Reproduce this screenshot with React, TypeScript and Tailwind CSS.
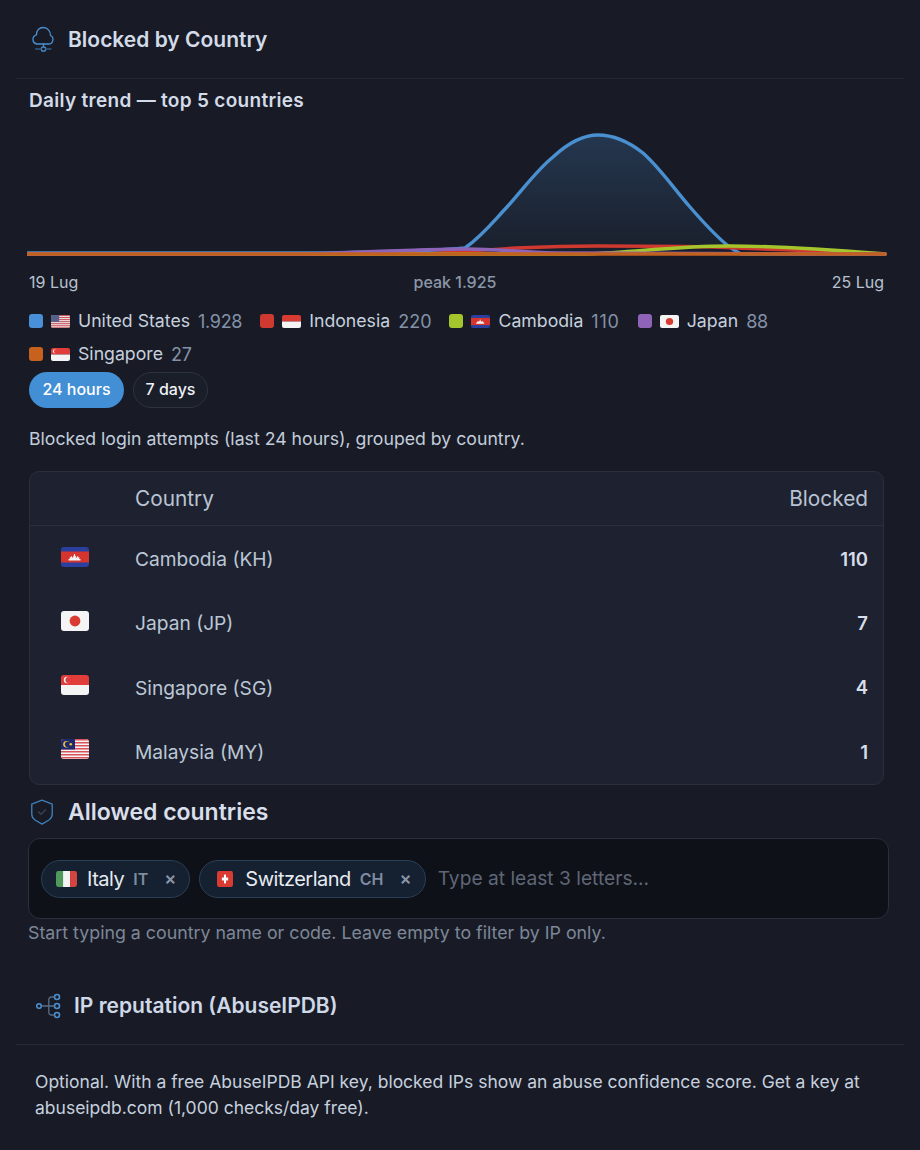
import React from "react";

type Code = "US" | "ID" | "KH" | "JP" | "SG" | "MY" | "IT" | "CH";

function FlagArt({ code }: { code: Code }) {
  switch (code) {
    case "US":
      return (
        <>
          <rect width="28" height="20" fill="#eeeeee" />
          {[0, 3, 6, 9, 12, 15, 18].map((y) => (
            <rect key={y} y={y} width="28" height="1.6" fill="#c9545c" />
          ))}
          <rect width="12" height="10.5" fill="#55608c" />
        </>
      );
    case "ID":
      return (
        <>
          <rect width="28" height="10" fill="#d93a32" />
          <rect y="10" width="28" height="10" fill="#f4f4f4" />
        </>
      );
    case "KH":
      return (
        <>
          <rect width="28" height="20" fill="#2b3f9e" />
          <rect y="4.5" width="28" height="11" fill="#d5352e" />
          <path d="M7.5 13.5v-1.6h1.2v-1.6h1.2V9.2h1V10.4h1.3V8.8h.8V7h1v1.8h.8v1.6h1.3V9.2h1v1.1h1.2v1.6h1.2v1.6z" fill="#f4f4f4" />
        </>
      );
    case "JP":
      return (
        <>
          <rect width="28" height="20" fill="#f4f4f4" />
          <circle cx="14" cy="10" r="5.4" fill="#d93a32" />
        </>
      );
    case "SG":
      return (
        <>
          <rect width="28" height="10" fill="#e23d3a" />
          <rect y="10" width="28" height="10" fill="#f4f4f4" />
          <circle cx="6" cy="5" r="3.2" fill="#f4f4f4" />
          <circle cx="7.4" cy="5" r="3" fill="#e23d3a" />
        </>
      );
    case "MY":
      return (
        <>
          <rect width="28" height="20" fill="#f4f4f4" />
          {[0, 3, 6, 9, 12, 15, 18].map((y) => (
            <rect key={y} y={y} width="28" height="1.5" fill="#d9525a" />
          ))}
          <rect width="14" height="10.5" fill="#1e2a6e" />
          <circle cx="5.5" cy="5.2" r="3.3" fill="#f2c230" />
          <circle cx="6.7" cy="5.2" r="2.8" fill="#1e2a6e" />
          <circle cx="9.8" cy="5.2" r="1.3" fill="#f2c230" />
        </>
      );
    case "IT":
      return (
        <>
          <rect width="9.4" height="20" fill="#4f9a5b" />
          <rect x="9.4" width="9.3" height="20" fill="#f4f4f4" />
          <rect x="18.7" width="9.3" height="20" fill="#d5453f" />
        </>
      );
    case "CH":
      return (
        <>
          <rect width="28" height="20" fill="#d93a32" />
          <rect x="12.2" y="4.5" width="3.6" height="11" fill="#fff" />
          <rect x="8.5" y="8.2" width="11" height="3.6" fill="#fff" />
        </>
      );
  }
}

function Flag({ code, w, h }: { code: Code; w: number; h: number }) {
  const id = `clip-${code}-${w}`;
  return (
    <svg width={w} height={h} viewBox="0 0 28 20" preserveAspectRatio="none" className="shrink-0 block">
      <clipPath id={id}>
        <rect width="28" height="20" rx="3" />
      </clipPath>
      <g clipPath={`url(#${id})`}>
        <FlagArt code={code} />
      </g>
    </svg>
  );
}

function CloudIcon() {
  return (
    <svg width="24" height="28" viewBox="0 0 24 28" fill="none" stroke="#4a90d0" strokeWidth="1.3" strokeLinecap="round" strokeLinejoin="round" className="shrink-0">
      <path d="M6 19H17.5A4.5 4.5 0 0 0 19.5 10.5C19.5 6 16.5 2.5 12.4 2.5C8 2.5 5.5 5.5 5.5 9.8A4.7 4.7 0 0 0 6 19Z" />
      <path d="M12.5 19v2.6" />
      <circle cx="12.5" cy="24" r="2.2" />
      <path d="M4.5 24h5.8M14.7 24h5.3" stroke="#2f5a85" />
    </svg>
  );
}

function ShieldIcon() {
  return (
    <svg width="26" height="28" viewBox="0 0 24 26" fill="none" strokeLinecap="round" strokeLinejoin="round" className="shrink-0">
      <path d="M12 2l9.5 3.6v9.6c0 2.5-1 3.8-3 5.2L12 24.2l-6.5-3.8c-2-1.4-3-2.7-3-5.2V5.6z" stroke="#3f7fb8" strokeWidth="1.25" />
      <path d="M8.8 13l2.3 2.2 4.2-4.2" stroke="#3c4352" strokeWidth="1.25" />
    </svg>
  );
}

function TreeIcon() {
  return (
    <svg width="26" height="26" viewBox="0 0 26 26" fill="none" stroke="#4a90d0" strokeWidth="1.6" className="shrink-0">
      <circle cx="3" cy="13" r="2.3" />
      <circle cx="21" cy="4" r="2.5" />
      <circle cx="21" cy="13" r="2.5" />
      <circle cx="21" cy="22" r="2.5" />
      <path d="M5.5 13h13M18.4 4h-3a2.6 2.6 0 0 0-2.6 2.6v12.8a2.6 2.6 0 0 0 2.6 2.6h3" stroke="#56708c" strokeWidth="1.3" />
    </svg>
  );
}

const bluePeak =
  "C455 108 465 95 480 79C497 60 510 42 526 29C540 16 555 7 571 7C587 7 602 14 616 25C633 40 648 62 663 79C676 94 688 107 700 117";

function Chart() {
  return (
    <svg width="860" height="134" viewBox="0 0 860 134" fill="none" className="block -ml-[2px]">
      <defs>
        <linearGradient id="blueFill" x1="0" y1="0" x2="0" y2="1">
          <stop offset="0" stopColor="#4a90d0" stopOpacity="0.24" />
          <stop offset="1" stopColor="#4a90d0" stopOpacity="0.03" />
        </linearGradient>
      </defs>
      <g strokeWidth="3.4" strokeLinecap="round" strokeLinejoin="round">
        <path d={`M438 120${bluePeak}L714 126L430 126Z`} fill="url(#blueFill)" />
        <path d={`M1 125H300C350 124 410 123 438 120${bluePeak}C705 121 710 124 714 126L858 126`} stroke="#4a90d0" />
        <path d="M1 126H400C460 122 500 118 570 118C620 118 670 118 710 120C760 122 820 124 858 126" stroke="#d0392f" />
        <path d="M1 126H560C610 124 650 118 702 118C760 118 820 123 858 126" stroke="#a4c62c" />
        <path d="M1 126H280C340 124 400 121 440 121C470 121 490 124 530 125L858 126" stroke="#8e63b8" />
        <path d="M1 126H858" stroke="#c2601f" />
      </g>
    </svg>
  );
}

const legend: { color: string; code: Code; name: string; value: string; track: string }[] = [
  { color: "bg-[#4a90d9]", code: "US", name: "United States", value: "1.928", track: "tracking-[-0.3px]" },
  { color: "bg-[#d0392f]", code: "ID", name: "Indonesia", value: "220", track: "tracking-[0px]" },
  { color: "bg-[#a4c62c]", code: "KH", name: "Cambodia", value: "110", track: "tracking-[0.8px]" },
  { color: "bg-[#8e63b8]", code: "JP", name: "Japan", value: "88", track: "tracking-[-0.3px]" },
  { color: "bg-[#c8601e]", code: "SG", name: "Singapore", value: "27", track: "tracking-[-0.3px]" },
];

const rows: { code: Code; name: string; value: string }[] = [
  { code: "KH", name: "Cambodia (KH)", value: "110" },
  { code: "JP", name: "Japan (JP)", value: "7" },
  { code: "SG", name: "Singapore (SG)", value: "4" },
  { code: "MY", name: "Malaysia (MY)", value: "1" },
];

function Chip({ code, name, iso, square }: { code: Code; name: string; iso: string; square?: boolean }) {
  return (
    <div className="flex items-center h-[38px] rounded-full border border-[#2a3f58] bg-[#152030] pl-[14px] pr-[13px]">
      {square ? (
        <span className="w-[21px] flex justify-center"><Flag code={code} w={16} h={16} /></span>
      ) : (
        <Flag code={code} w={21} h={16} />
      )}
      <span className="ml-[10px] text-[20px] leading-none text-[#e6ebf2] tracking-[-0.5px]">{name}</span>
      <span className="ml-[9px] text-[16px] leading-none font-semibold text-[#7f8ba0]">{iso}</span>
      <span className="ml-[16px] text-[18px] leading-none font-semibold text-[#8a94a6]">×</span>
    </div>
  );
}

export default function App() {
  return (
    <div className="w-[920px] h-[1150px] overflow-hidden bg-[#181b26] text-[#cfd8e6] font-['Inter','Liberation_Sans',sans-serif]">
      <header className="mx-4 h-[79px] border-b border-[#232733] flex items-center pl-[15px] gap-[13px]">
        <CloudIcon />
        <h2 className="text-[21px] font-semibold text-[#d3dbe8] pt-[1px]">Blocked by Country</h2>
      </header>

      <div className="pl-[29px] pr-[36px]">
        <h3 className="mt-[10px] h-[24px] leading-[24px] text-[19px] font-semibold text-[#d3dbe8] tracking-[0.3px]">Daily trend — top 5 countries</h3>
        <div className="mt-[15px] h-[131px]"><Chart /></div>
        <div className="mt-[13px] flex justify-between items-center text-[16px] leading-[20px] text-[#b8c2d0]">
          <span>19 Lug</span>
          <span className="font-medium text-[#8b97a8]">peak 1.925</span>
          <span>25 Lug</span>
        </div>

        <div className="mt-[18px] flex flex-wrap gap-x-[18px] gap-y-[11px]">
          {legend.map((l) => (
            <div key={l.code} className="flex items-center h-[22px]">
              <span className={`w-[14px] h-[14px] rounded-[3px] ${l.color}`} />
              <span className="ml-[8px]"><Flag code={l.code} w={19} h={13} /></span>
              <span className="ml-[8px] text-[17.7px] text-[#c6d0de]">{l.name}</span>
              <span className={`ml-[8px] text-[18px] text-[#8492a8] ${l.track}`}>{l.value}</span>
            </div>
          ))}
        </div>

        <div className="mt-[7px] flex gap-[9px]">
          <span className="h-[36px] w-[95px] rounded-full bg-[#428fd6] text-white text-[16px] font-medium flex items-center justify-center pb-[2px]">24 hours</span>
          <span className="h-[36px] w-[75px] rounded-full border border-[#2d3340] bg-[#1a1e29] text-[#eef1f5] text-[16px] font-medium flex items-center justify-center pb-[2px]">7 days</span>
        </div>

        <p className="mt-[19px] h-[24px] leading-[24px] text-[17.7px] text-[#c3cddb]">Blocked login attempts (last 24 hours), grouped by country.</p>

        <div className="mt-[20px] w-[855px] h-[314px] rounded-[10px] border border-[#2a2f3c] bg-[#1e2230] overflow-hidden">
          <div className="h-[54px] border-b border-[#2a2f3c] flex items-center pl-[105px] pr-[15px] justify-between text-[20.8px] text-[#b9c4d3]">
            <span>Country</span>
            <span>Blocked</span>
          </div>
          <div className="pt-[1.5px]">
            {rows.map((r) => (
              <div key={r.code} className="h-[64.25px] flex items-center pr-[15px]">
                <span className="w-[105px] pl-[31px] -mt-[6px]"><Flag code={r.code} w={28} h={20} /></span>
                <span className="flex-1 text-[19.2px] text-[#bcc7d6]">{r.name}</span>
                <span className="text-[18.5px] font-semibold text-[#d7deea]">{r.value}</span>
              </div>
            ))}
          </div>
        </div>

        <div className="mt-[12px] h-[30px] flex items-center gap-[13px]">
          <ShieldIcon />
          <h3 className="text-[23px] font-semibold text-[#d8dfea]">Allowed countries</h3>
        </div>

        <div className="-ml-[1px] mt-[11px] w-[861px] h-[81px] rounded-[12px] border border-[#2a2f3c] bg-[#0f1119] flex items-center pl-[12px] gap-[9px]">
          <Chip code="IT" name="Italy" iso="IT" />
          <Chip code="CH" name="Switzerland" iso="CH" square />
          <span className="ml-[3px] text-[19.2px] text-[#5f6776]">Type at least 3 letters...</span>
        </div>
        <p className="-ml-[1px] mt-[2px] h-[24px] leading-[24px] text-[17.8px] text-[#7d8797]">Start typing a country name or code. Leave empty to filter by IP only.</p>
      </div>

      <div className="mt-[28px] mx-4 h-[72px] border-b border-[#282c38] flex items-center pl-[20px] gap-[12px] pb-[5px]">
        <TreeIcon />
        <h3 className="text-[21px] font-semibold text-[#cfd8e6]">IP reputation (AbuseIPDB)</h3>
      </div>
      <p className="mt-[24px] pl-[35px] pr-[40px] text-[17.5px] leading-[26px] text-[#c6d0de]">
        Optional. With a free AbuseIPDB API key, blocked IPs show an abuse confidence score. Get a key at abuseipdb.com (1,000 checks/day free).
      </p>
    </div>
  );
}
